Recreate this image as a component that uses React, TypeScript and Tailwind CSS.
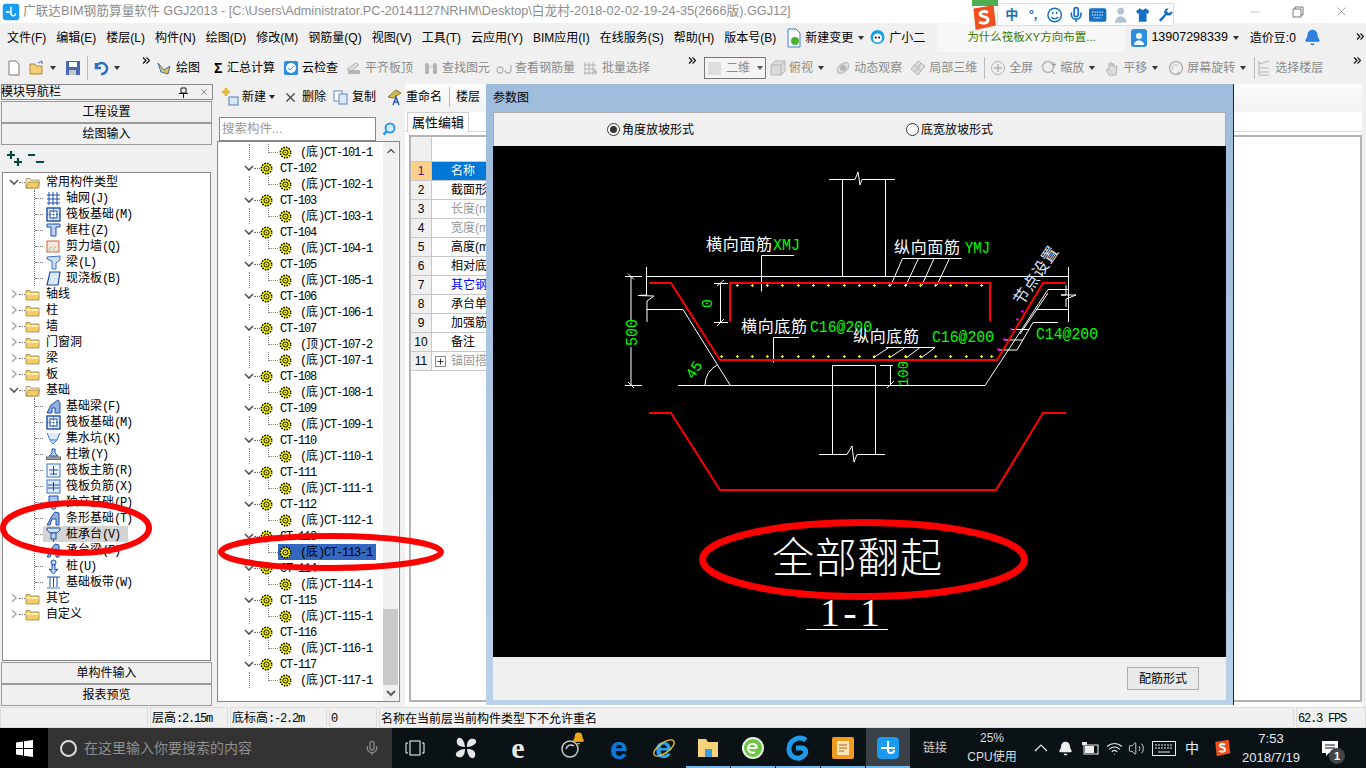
import { ChevronUp, Mic, Wifi, Volume2, Bell, X, Minus, Plus } from 'lucide-react';
import type { ReactNode } from 'react';

const Sim = ({ text, className = '' }: { text: string; className?: string }) => {
  const runs = text.match(/[\x00-\x7f]+|[^\x00-\x7f]+/g) || [];
  return (
    <span className={`whitespace-nowrap ${className}`}>
      {runs.map((r, i) =>
        r.charCodeAt(0) < 128 ? (
          <span key={i} className="font-['Liberation_Mono',monospace] tracking-[-1.2px] text-[12px]">{r}</span>
        ) : (
          <span key={i} className="font-['Noto_Sans_CJK_SC',sans-serif] text-[12px] leading-none">{r}</span>
        )
      )}
    </span>
  );
};

const Chev = ({ open }: { open: boolean }) => (
  <svg width="10" height="10" viewBox="0 0 10 10" className="shrink-0">
    {open ? (
      <polyline points="1,3 5,7 9,3" fill="none" stroke="#555" strokeWidth="1.6" />
    ) : (
      <polyline points="3,1 7,5 3,9" fill="none" stroke="#b0b0b0" strokeWidth="1.6" />
    )}
  </svg>
);

const Folder = ({ open }: { open: boolean }) => (
  <svg width="15" height="13" viewBox="0 0 15 13" className="shrink-0">
    <path d="M1 2.5h4l1 1.5h8v8H1z" fill={open ? '#fff3cf' : '#f6cd62'} stroke="#9a8350" strokeWidth="0.8" />
    {open ? (
      <path d="M1 12l2.5-6h11l-2.5 6z" fill="#f6cd62" stroke="#9a8350" strokeWidth="0.8" />
    ) : (
      <rect x="1.5" y="5" width="12" height="2" fill="#fff0b8" />
    )}
  </svg>
);

const Gear = () => (
  <svg width="13" height="13" viewBox="0 0 13 13" className="shrink-0">
    <circle cx="6.5" cy="6.5" r="5.2" fill="#ffff00" stroke="#000" strokeWidth="1.6" strokeDasharray="1.6 1.1" />
    <circle cx="6.5" cy="6.5" r="2.6" fill="#ffff00" stroke="#000" strokeWidth="1" />
    <rect x="5.7" y="5.7" width="1.6" height="1.6" fill="#555" />
  </svg>
);

const kinds: Record<string, ReactNode> = {
  grid: <path d="M3 1v13M7 1v13M11 1v13M1 4h13M1 8h13M1 12h13" stroke="#1d4fa8" fill="none" />,
  raft: <><rect x="1" y="1" width="13" height="13" fill="#dfeaf8" stroke="#1d4fa8" strokeWidth="1.4" /><rect x="4" y="4" width="7" height="7" fill="#fff" stroke="#1d4fa8" /><path d="M7.5 1v13M1 7.5h13" stroke="#1d4fa8" strokeDasharray="1.5 1.5" /></>,
  col: <><path d="M1 1h13v3H10v9H5V4H1z" fill="#bcd4f4" stroke="#1d4fa8" /></>,
  wall: <><rect x="1" y="2" width="12" height="11" fill="#f0e6da" stroke="#c8693a" /><path d="M3 11l2-3 3 3 2-4" stroke="#999" strokeDasharray="1 1" fill="none" /></>,
  beam: <><path d="M1 2l13-1v4l-4 3v6H6V6L1 4z" fill="#cfe0f6" stroke="#3b74c4" /></>,
  slab: <path d="M4 1h10l-2 13H1z" fill="#dbe9fb" stroke="#1d4fa8" strokeWidth="1.2" />,
  fbeam: <><path d="M1 14l4-8 7-5 2 3v10H9V9H6v5z" fill="#8fb0dc" stroke="#1d4fa8" /></>,
  pit: <><path d="M1 2l3 7h7l3-7M4 9l3 4 4-4" fill="#dbe9fb" stroke="#3b74c4" /></>,
  pier: <><path d="M6 2h3v4l3 3H3l3-3z" fill="#bcd4f4" stroke="#1d4fa8" /><rect x="0.5" y="10" width="14" height="2.5" fill="#aaa" stroke="#666" /></>,
  main: <><rect x="1" y="1" width="13" height="13" fill="#eef4fc" stroke="#3b74c4" /><path d="M7.5 3v9M3 7h9M4 11h7" stroke="#1d4fa8" fill="none" /></>,
  neg: <><rect x="1" y="1" width="13" height="13" fill="#dfeaf8" stroke="#3b74c4" /><path d="M7.5 3v9M2 6h11M2 9h11" stroke="#1d4fa8" fill="none" /></>,
  iso: <><path d="M3 1h9v7l-3 6H6L3 8z" fill="#a9c4ea" stroke="#1d4fa8" /></>,
  strip: <><path d="M1 14l5-9 3-4 4 1v12h-3V8H6l-2 6z" fill="#8fb0dc" stroke="#1d4fa8" /></>,
  cap: <><path d="M1 1h13v2l-3 3H4L1 3z" fill="#cfe0f6" stroke="#1d4fa8" /><rect x="5" y="6" width="5" height="6" fill="#bcd4f4" stroke="#1d4fa8" /><path d="M7.5 12v3" stroke="#1d4fa8" /></>,
  pile: <><circle cx="7.5" cy="3.5" r="2.5" fill="#bcd4f4" stroke="#1d4fa8" /><path d="M6 6h3v5l3-1-4.5 5L3 10l3 1z" fill="#bcd4f4" stroke="#1d4fa8" /></>,
  band: <><path d="M1 2h13M1 13h13M4 2v11M11 2v11M7.5 2v11" stroke="#1d4fa8" fill="none" /><rect x="1" y="12" width="13" height="2" fill="#9dbce6" /></>,
};

const Comp = ({ kind }: { kind: string }) => (
  <svg width="15" height="15" viewBox="0 0 15 15" className="shrink-0">{kinds[kind]}</svg>
);

const LeftChild = ({ label, kind, selected }: { label: string; kind: string; selected?: boolean }) => (
  <div className="flex h-4 items-center">
    <div className="w-[8px] border-t border-dotted border-[#777]" />
    <div className={`flex h-4 items-center pl-[3px] pr-[8px] ${selected ? 'bg-[#d4d4d4]' : ''}`}>
      <Comp kind={kind} />
      <Sim text={label} className="ml-[5px]" />
    </div>
  </div>
);

const LeftGroup = ({ label, open, items }: { label: string; open?: boolean; items?: [string, string][] }) => (
  <div>
    <div className="flex h-4 items-center pl-[6px]">
      <Chev open={!!open} />
      <div className="w-[6px] border-t border-dotted border-[#777]" />
      <Folder open={!!open} />
      <Sim text={label} className="ml-[6px]" />
    </div>
    {items && (
      <div className="ml-[31px] border-l border-dotted border-[#777]">
        {items.map(([l, k]) => (
          <LeftChild key={l} label={l} kind={k} selected={l === '桩承台(V)'} />
        ))}
      </div>
    )}
  </div>
);

const ctTree: [string, string[]][] = [
  ['', ['(底)CT-101-1']],
  ...Array.from({ length: 16 }, (_, i): [string, string[]] => {
    const n = 102 + i;
    return [`CT-${n}`, n === 107 ? ['(顶)CT-107-2', '(底)CT-107-1'] : [`(底)CT-${n}-1`]];
  }),
];

const TreeRows = () => (
  <div className="flex-1 overflow-hidden pt-[2px]">
    {ctTree.map(([head, kids]) => (
      <div key={head}>
        {head && (
          <div className="flex h-4 items-center pl-[26px]">
            <Chev open />
            <div className="w-[6px] border-t border-dotted border-[#777]" />
            <Gear />
            <Sim text={head} className="ml-[7px]" />
          </div>
        )}
        {kids.map((k) => (
          <div key={k} className="flex h-4 items-center">
            <div className="w-[31px]" />
            <div className="h-4 w-[19px] border-l border-dotted border-[#777]" />
            <div className="h-[9px] w-[10px] self-start border-b border-l border-dotted border-[#777]" />
            <div className={`flex h-4 w-[98px] items-center pl-[1px] ${k === '(底)CT-113-1' ? 'bg-[#3268c0]' : ''}`}>
              <Gear />
              <Sim text={k} className="ml-[8px]" />
            </div>
          </div>
        ))}
      </div>
    ))}
  </div>
);

const PanelBtn = ({ label }: { label: string }) => (
  <div className="mx-[1px] flex h-[22px] items-center justify-center border border-[#9a9a9a] bg-[#f0f0f0] text-[12px] text-black">{label}</div>
);

const tool = (d: ReactNode, w = 16) => (
  <svg width={w} height="16" viewBox="0 0 16 16" className="shrink-0">{d}</svg>
);

const Caret = () => <span className="mx-[5px] inline-block h-0 w-0 border-x-[3px] border-t-[4px] border-x-transparent border-t-[#333]" />;

const More = ({ className }: { className: string }) => (
  <svg width="8" height="7" viewBox="0 0 8 7" className={`shrink-0 self-start mt-[5px] ${className}`}>
    <path d="M1 0.5l3 3-3 3M4.5 0.5l3 3-3 3" fill="none" stroke="#111" strokeWidth="1.2" />
  </svg>
);

const menus = ['文件(F)', '编辑(E)', '楼层(L)', '构件(N)', '绘图(D)', '修改(M)', '钢筋量(Q)', '视图(V)', '工具(T)', '云应用(Y)', 'BIM应用(I)', '在线服务(S)', '帮助(H)', '版本号(B)'];

const gray = 'text-[#8b8b8b]';
const S1 = '#b4b4b4';
const S2 = '#dcdcdc';
const grayIcons: Record<string, ReactNode> = {
  align: tool(<><path d="M1 9l9-6 3 2-8 6z" fill={S2} stroke={S1} /><rect x="2" y="10" width="12" height="4" fill={S1} /></>),
  find: tool(<><rect x="2" y="3" width="4" height="11" rx="1.5" fill={S1} /><rect x="10" y="3" width="4" height="11" rx="1.5" fill={S1} /><rect x="6" y="5" width="4" height="3" fill={S2} /></>),
  view: tool(<path d="M1 10a3 3 0 1 0 6 0a3 3 0 1 0-6 0M9 10a3 3 0 1 0 6 0V5" fill="none" stroke={S1} strokeWidth="1.3" />),
  batch: tool(<><path d="M2 2v13M6 2v13M10 2v13M1 5h12M1 9h12M1 13h12" stroke={S1} fill="none" /><path d="M10 9l5 3-2 1 1 2-2-1z" fill={S1} /></>),
  top: tool(<><path d="M1 5l4-4h10v10l-4 4H1z" fill={S2} stroke={S1} /><path d="M1 5h10v10M11 5l4-4" fill="none" stroke={S1} /></>),
  orbit: tool(<><ellipse cx="8" cy="8" rx="7" ry="4" transform="rotate(-40 8 8)" fill={S2} stroke={S1} /><circle cx="8" cy="8" r="3" fill={S1} /></>),
  local: tool(<><path d="M8 1l7 5-7 9-7-6z" fill={S2} stroke={S1} /><path d="M4 5l7 6M11 3l-6 9" stroke={S1} /></>),
  full: tool(<><circle cx="8" cy="8" r="6.5" fill="#eee" stroke={S1} /><path d="M8 4v8M4 8h8" stroke="#999" /></>),
  zoom: tool(<><circle cx="7" cy="7" r="5.5" fill="#eee" stroke={S1} strokeWidth="1.5" /><path d="M11 11l3 3M13 2v5M11 4.5h4" stroke="#999" /></>),
  pan: tool(<path d="M5 15c-2-3-3-5-2-6l2 1V3l2 3V2l2 4V3l2 4 2-1-1 9z" fill={S2} stroke={S1} />),
  rotate: tool(<><circle cx="8" cy="8" r="6.5" fill="none" stroke={S1} strokeWidth="1.5" /><path d="M5 10a3 3 0 0 1 5-4" fill="none" stroke={S1} /><path d="M11 14h-3l3-3z" fill={S1} /></>),
  floor: tool(<path d="M3 4l10-3M3 8h10M3 12h10M3 15h10M3 1v14" stroke={S1} fill="none" />),
};

const Tb = ({ icon, label, cls = '', muted }: { icon: ReactNode; label: string; cls?: string; muted?: boolean }) => (
  <div className={`flex shrink-0 items-center gap-[3px] ${cls}`}>
    {icon}
    <span className={`whitespace-nowrap ${muted ? gray : 'text-black'}`}>{label}</span>
  </div>
);

const props: [string, string, string][] = [
  ['1', '名称', 'sel'],
  ['2', '截面形状', ''],
  ['3', '长度(mm)', 'gray'],
  ['4', '宽度(mm)', 'gray'],
  ['5', '高度(mm)', ''],
  ['6', '相对底标高(m)', ''],
  ['7', '其它钢筋', 'blue'],
  ['8', '承台单边加强筋', ''],
  ['9', '加强筋起步(mm)', ''],
  ['10', '备注', ''],
  ['11', '锚固搭接', 'plus'],
];

const topDots = [412, 457, 502, 547, 595, 640, 685, 733, 778, 823, 869, 917, 962, 1007, 1052, 1099, 1145];
const botDots = [365, ...topDots, 1175];
const pinks = [[1195, 538], [1213, 508], [1234, 478], [1252, 448], [1267, 424]];

const Cad = () => {
  const W = '#ffffff';
  const G = '#00ff00';
  const cjk = "'Noto Sans CJK SC', sans-serif";
  const mono = "'Liberation Mono', monospace";
  return (
    <svg viewBox="493 146 733 511" className="h-[511px] w-[733px] bg-black">
      <g fill="none" stroke={W} strokeWidth="1">
        <path d="M829 179.5H855L858 172L860 185L862 179.5H895M842.5 179.5V276.5M885.5 179.5V276.5" />
        <path d="M646.5 276.5H1068.5M646.5 267V295L638 295.5L654 296L647 301V322M646.5 309.5H683L730 385" />
        <path d="M678 385.5H985L1048 289.5H1068M1068.5 267V322M1036 309.5H1068.5M1066 285V295L1061 295L1076 295L1066 299V307" />
        <path d="M625 276.5H642M631 276.5V320M631 347V385M625 385.5H642M628 273.5L634 279.5M628 382L634 388" />
        <path d="M714 283.5H728M720.5 283.5V322.5M714 322.5H728M717 286L724 280M717 326L724 319" />
        <path d="M832.5 385.5V365.5H875.5V454M832.5 385.5V454.5M819 454.5H847L852 446L854 462L857 454.5H885" />
        <path d="M880 365.5H893M890.5 365.5V385M887 388L894 381" />
        <path d="M705 385A24 24 0 0 1 717 365" />
        <path d="M761.5 291.5V255.5H794M902.5 258.5H961.5M902.5 258.5L891 285M918.5 258.5L906 285M934 258.5L922 285M949.5 258.5L937 285" />
        <path d="M773.5 362.5V337.5H799M886 347.5H935M889 347.5L873 358M905 347.5L889 358M920 347.5L906 358M935 347.5L921 358" />
        <path d="M1058 322.5H1033L1017 350M1012 329.5H1029M1005 340H1023M999 350H1017M1048 293L1020 334" />
      </g>
      <g fill="none" stroke="#ff0000" strokeWidth="2">
        <path d="M649 283H671L720 360H997L1043 283H1066" />
        <path d="M730 321.5V283H990V321.5" />
        <path d="M649 413H671L720 490H996L1043 413H1066" />
      </g>
      {topDots.map((x) => (
        <path key={x} d={`M${x / 3 + 598.5} 285.5h3M${x / 3 + 600} 284v3`} stroke="#ffff00" />
      ))}
      {botDots.map((x, i) => (
        <path key={i} d={`M${x / 3 + 598.5} 356.5h3M${x / 3 + 600} 355v3`} stroke="#ffff00" />
      ))}
      {pinks.map(([x, y]) => (
        <path key={x} d={`M${x / 3 + 598.5} ${y / 3 + 170}h3M${x / 3 + 600} ${y / 3 + 168.5}v3`} stroke="#ff00ff" />
      ))}
      <text x="706" y="250" fill={W} fontFamily={cjk} fontSize="16" textLength="66">横向面筋</text>
      <text x="773" y="250" fill={G} fontFamily={mono} fontSize="16" textLength="27" lengthAdjust="spacingAndGlyphs">XMJ</text>
      <text x="894" y="253" fill={W} fontFamily={cjk} fontSize="16" textLength="66">纵向面筋</text>
      <text x="965" y="253" fill={G} fontFamily={mono} fontSize="16" textLength="25" lengthAdjust="spacingAndGlyphs">YMJ</text>
      <text x="741" y="332" fill={W} fontFamily={cjk} fontSize="16" textLength="66">横向底筋</text>
      <text x="810" y="332" fill={G} fontFamily={mono} fontSize="16" textLength="62" lengthAdjust="spacingAndGlyphs">C16@200</text>
      <text x="853" y="342" fill={W} fontFamily={cjk} fontSize="16" textLength="66">纵向底筋</text>
      <text x="932" y="342" fill={G} fontFamily={mono} fontSize="16" textLength="62" lengthAdjust="spacingAndGlyphs">C16@200</text>
      <text x="1036" y="339" fill={G} fontFamily={mono} fontSize="16" textLength="62" lengthAdjust="spacingAndGlyphs">C14@200</text>
      <text transform="translate(637 346) rotate(-90)" fill={G} fontFamily={mono} fontSize="17" textLength="27" lengthAdjust="spacingAndGlyphs">500</text>
      <text transform="translate(712 308) rotate(-90)" fill={G} fontFamily={mono} fontSize="15">0</text>
      <text transform="translate(693 380) rotate(-57)" fill={G} fontFamily={mono} fontSize="15" textLength="18" lengthAdjust="spacingAndGlyphs">45</text>
      <text transform="translate(908 386) rotate(-90)" fill={G} fontFamily={mono} fontSize="15" textLength="25" lengthAdjust="spacingAndGlyphs">100</text>
      <text transform="translate(1022 306) rotate(-56)" fill="#dfe6ff" fontFamily={cjk} fontSize="16" textLength="66">节点设置</text>
      <text x="772" y="573" fill={W} fontFamily={`'Liberation Serif', ${cjk}`} fontSize="42" textLength="170" fontWeight="300">全部翻起</text>
      <text x="820" y="626" fill={W} fontFamily="'Liberation Serif', serif" fontSize="40" textLength="60">1-1</text>
      <path d="M806 629.5H888" stroke={W} />
    </svg>
  );
};

const Radio = ({ on, label, cls }: { on?: boolean; label: string; cls: string }) => (
  <div className={`flex items-center gap-[2px] ${cls}`}>
    <span className="flex h-[13px] w-[13px] items-center justify-center rounded-full border border-[#333] bg-white">
      {on && <span className="h-[7px] w-[7px] rounded-full bg-[#333]" />}
    </span>
    <span className="text-[12px] text-black">{label}</span>
  </div>
);

const Ellipse = ({ cls, rx, ry, sw }: { cls: string; rx: number; ry: number; sw: number }) => (
  <svg width={rx * 2 + sw} height={ry * 2 + sw} className={`pointer-events-none absolute ${cls}`}>
    <ellipse cx={rx + sw / 2} cy={ry + sw / 2} rx={rx} ry={ry} fill="none" stroke="#ff0000" strokeWidth={sw} />
  </svg>
);

const Tray = ({ children, cls }: { children: ReactNode; cls: string }) => (
  <div className={`relative flex h-10 shrink-0 items-center justify-center ${cls}`}>{children}</div>
);

const Underlined = ({ children, active }: { children: ReactNode; active?: boolean }) => (
  <div className={`relative flex h-10 w-[44px] shrink-0 items-center justify-center ${active ? 'bg-[#3a4248]' : ''}`}>
    {children}
    <div className="absolute bottom-0 left-0 right-0 h-[2px] bg-[#76b9ed]" />
  </div>
);

const LogoS = ({ s = 24 }: { s?: number }) => (
  <svg width={s} height={s} viewBox="0 0 24 24">
    <path d="M3 4L21 1l2 18-18 4z" fill="#f0501e" />
    <path d="M16 7.5c-3-1.5-7-1-7 1.5s7 1.5 7 5-5 3.5-8 2" fill="none" stroke="#fff" strokeWidth="2.6" />
  </svg>
);

const BlueApp = () => (
  <svg width="24" height="24" viewBox="0 0 24 24">
    <rect x="1" y="1" width="22" height="22" rx="4" fill="#1a9bf0" />
    <path d="M12 5v9a3 3 0 0 0 6 0M12 12H5M12 12h7" fill="none" stroke="#fff" strokeWidth="2" />
  </svg>
);

export default function App() {
  return (
    <div className="relative h-[768px] w-[1366px] overflow-hidden bg-[#f0f0f0] font-['Liberation_Sans','Noto_Sans_CJK_SC',sans-serif] text-[12px] text-black">
      {/* title bar */}
      <div className="flex h-[23px] items-center bg-white pl-[2px]">
        <svg width="18" height="18" viewBox="0 0 24 24" className="shrink-0"><rect x="1" y="1" width="22" height="22" rx="4" fill="#1a9bf0" /><path d="M12 5v9a3 3 0 0 0 6 0M12 12H5" fill="none" stroke="#fff" strokeWidth="2" /></svg>
        <span className="ml-[3px] whitespace-nowrap text-[12.7px] text-[#8d8d8d]">广联达BIM钢筋算量软件 GGJ2013 - [C:\Users\Administrator.PC-20141127NRHM\Desktop\白龙村-2018-02-02-19-24-35(2666版).GGJ12]</span>
        <div className="ml-auto mr-[17px] flex items-center gap-[30px] text-[#777]">
          <Minus size={14} className="text-[#ccc]" />
          <svg width="12" height="12" viewBox="0 0 12 12"><path d="M3 3V1h8v8H9M1 3h8v8H1z" fill="none" stroke="#777" /></svg>
          <X size={15} strokeWidth={1} />
        </div>
      </div>
      {/* menu */}
      <div className="flex h-[29px] items-center pl-[7px]">
        {menus.map((m) => (
          <span key={m} className="mr-[10px] whitespace-nowrap text-[12px]">{m}</span>
        ))}
        <div className="flex items-center">
          <svg width="16" height="20" viewBox="0 0 16 20" className="shrink-0"><path d="M2 1h8l4 4v14H2z" fill="#fff" stroke="#3d7ec9" /><circle cx="9" cy="13" r="4" fill="#4caf34" /></svg>
          <span className="ml-[3px] whitespace-nowrap">新建变更</span><Caret />
          <svg width="17" height="18" viewBox="0 0 17 18" className="shrink-0"><circle cx="8.5" cy="8" r="7" fill="#18a0e8" /><circle cx="8.5" cy="9" r="4.5" fill="#fff" /><circle cx="6.8" cy="8.5" r="1" /><circle cx="10.2" cy="8.5" r="1" /></svg>
          <span className="ml-[3px] whitespace-nowrap">广小二</span>
        </div>
        <div className="ml-[12px] flex h-[29px] w-[188px] shrink-0 items-center rounded-t-[4px] bg-[#f7f7f7] pl-[30px] text-[11.5px] text-[#3b7a00]">为什么筏板XY方向布置...</div>
        <div className="flex flex-1 items-center pl-[6px] pr-[2px]">
          <svg width="16" height="18" viewBox="0 0 16 18" className="shrink-0"><rect width="16" height="18" rx="3" fill="#2d8fe0" /><circle cx="8" cy="7" r="3" fill="#fff" /><path d="M3 16c0-6 10-6 10 0z" fill="#fff" /></svg>
          <span className="ml-[4px] whitespace-nowrap text-[12.5px]">13907298339</span><Caret />
          <span className="ml-[6px] whitespace-nowrap">造价豆:0</span>
          <Bell size={17} fill="#2d7fe0" stroke="#2d7fe0" className="ml-[8px]" />
          <More className="ml-auto" />
        </div>
      </div>
      {/* toolbar */}
      <div className="flex h-[32px] items-center overflow-hidden pl-[6px] text-[12px]">
        {tool(<path d="M3 1h7l3 3v11H3z" fill="#fff" stroke="#777" />)}
        <div className="ml-[7px]">{tool(<><path d="M1 4h5l1 2h6v8H1z" fill="#f4cf74" stroke="#a98a3e" /><path d="M9 3l4-2v3" stroke="#2d6fc0" fill="none" /></>)}</div>
        <Caret />
        <div className="ml-[4px]">{tool(<><rect x="1" y="1" width="14" height="14" fill="#4967b5" /><rect x="4" y="2" width="8" height="5" fill="#fff" /><rect x="4" y="10" width="7" height="5" fill="#c8c8c8" /></>)}</div>
        <div className="ml-[6px] h-[24px] border-l border-[#bbb]" />
        <div className="ml-[5px]">{tool(<path d="M3 3v5h5M3 8a5.5 5.5 0 1 1 5 6" fill="none" stroke="#2d6fc0" strokeWidth="2.5" />)}</div>
        <Caret />
        <More className="ml-[17px] mr-[5px]" />
        <Tb icon={tool(<><path d="M2 3l6 7 6-4-2 8-7-2z" fill="#e8c24a" stroke="#3d6fb5" /></>, 18)} label="绘图" />
        <Tb cls="ml-[14px]" icon={<span className="w-[10px] text-[14px] font-bold leading-none">Σ</span>} label="汇总计算" />
        <Tb cls="ml-[8px]" icon={tool(<><rect x="1" y="1" width="15" height="15" rx="2" fill="#2d8fe0" transform="scale(.94)" /><circle cx="8" cy="8" r="5" fill="#fff" /><path d="M5 8l2 2 4-4" stroke="#2d8fe0" fill="none" /></>)} label="云检查" />
        <Tb cls="ml-[8px]" muted icon={grayIcons.align} label="平齐板顶" />
        <Tb cls="ml-[10px]" muted icon={grayIcons.find} label="查找图元" />
        <Tb cls="ml-[6px]" muted icon={grayIcons.view} label="查看钢筋量" />
        <Tb cls="ml-[8px]" muted icon={grayIcons.batch} label="批量选择" />
        <More className="ml-[38px] mr-[2px]" />
        <div className="ml-[6px] flex h-[22px] w-[62px] shrink-0 items-center border border-[#777] bg-[#f4f4f4] pl-[3px]">
          <span className="h-[13px] w-[13px] bg-[#dedede]" />
          <span className={`ml-[5px] ${gray}`}>二维</span>
          <span className="ml-[7px] h-0 w-0 border-x-[3px] border-t-[4px] border-x-transparent border-t-[#555]" />
        </div>
        <Tb cls="ml-[4px]" muted icon={grayIcons.top} label="俯视" />
        <Caret />
        <Tb cls="ml-[6px]" muted icon={grayIcons.orbit} label="动态观察" />
        <Tb cls="ml-[8px]" muted icon={grayIcons.local} label="局部三维" />
        <div className="ml-[7px] h-[22px] border-l border-[#bbb]" />
        <Tb cls="ml-[5px]" muted icon={grayIcons.full} label="全屏" />
        <Tb cls="ml-[8px]" muted icon={grayIcons.zoom} label="缩放" />
        <Caret />
        <Tb cls="ml-[4px]" muted icon={grayIcons.pan} label="平移" />
        <Caret />
        <Tb cls="ml-[5px]" muted icon={grayIcons.rotate} label="屏幕旋转" />
        <Caret />
        <div className="ml-[3px] h-[22px] border-l border-[#bbb]" />
        <Tb cls="ml-[1px]" muted icon={grayIcons.floor} label="选择楼层" />
        <More className="ml-auto mr-[5px]" />
      </div>

      {/* main */}
      <div className="relative isolate flex h-[623px]">
        <div className="flex w-[213px] shrink-0 flex-col">
          <div className="mb-[1px] ml-[1px] flex h-[16px] items-center border border-[#888] bg-[#f0f0f0] pr-[3px] text-[12px] leading-none">
            <span className="-ml-[1px]">模块导航栏</span>
            <svg width="9" height="11" viewBox="0 0 9 11" className="ml-auto mr-[11px]"><path d="M2 1h5v5H2zM0 6.5h9M4.5 7v4" fill="none" stroke="#111" /></svg>
            <X size={10} strokeWidth={1} />
          </div>
          <PanelBtn label="工程设置" />
          <PanelBtn label="绘图输入" />
          <div className="flex h-[27px] items-center gap-[5px] pl-[7px]">
            <svg width="16" height="16" viewBox="0 0 16 16"><path d="M4 0v8M0 4h8M11 7v8M7 11h8" stroke="#004a4a" strokeWidth="2.2" /></svg>
            <svg width="16" height="16" viewBox="0 0 16 16"><path d="M0 4h7M8 11h8" stroke="#004a4a" strokeWidth="2.2" /></svg>
          </div>
          <div className="mx-[2px] flex-1 overflow-hidden border border-[#888] bg-white pt-[1px]">
            <LeftGroup label="常用构件类型" open items={[['轴网(J)', 'grid'], ['筏板基础(M)', 'raft'], ['框柱(Z)', 'col'], ['剪力墙(Q)', 'wall'], ['梁(L)', 'beam'], ['现浇板(B)', 'slab']]} />
            {['轴线', '柱', '墙', '门窗洞', '梁', '板'].map((l, i) => <LeftGroup key={i} label={l} />)}
            <LeftGroup label="基础" open items={[['基础梁(F)', 'fbeam'], ['筏板基础(M)', 'raft'], ['集水坑(K)', 'pit'], ['柱墩(Y)', 'pier'], ['筏板主筋(R)', 'main'], ['筏板负筋(X)', 'neg'], ['独立基础(P)', 'iso'], ['条形基础(T)', 'strip'], ['桩承台(V)', 'cap'], ['承台梁(F)', 'strip'], ['桩(U)', 'pile'], ['基础板带(W)', 'band']]} />
            <LeftGroup label="其它" />
            <LeftGroup label="自定义" />
          </div>
          <div className="mt-[1px]"><PanelBtn label="单构件输入" /></div>
          <div className="mb-[1px]"><PanelBtn label="报表预览" /></div>
        </div>

        <div className="relative z-10 ml-[4px] flex w-[188px] shrink-0 flex-col">
          <div className="mb-[7px] flex h-[26px] items-center gap-[3px] whitespace-nowrap pl-[4px]">
            <svg width="18" height="18" viewBox="0 0 18 18" className="shrink-0"><path d="M5 0v8M1 4h8" stroke="#e2b93b" strokeWidth="3" /><rect x="8" y="9" width="9" height="8" fill="#dce8f8" stroke="#4a7cc0" /></svg>
            <span className="shrink-0">新建</span><span className="h-0 w-0 shrink-0 border-x-[3px] border-t-[4px] border-x-transparent border-t-[#222]" />
            <X size={15} strokeWidth={2} className="ml-[5px] shrink-0 text-[#444]" />
            <span className="ml-[1px] shrink-0">删除</span>
            <svg width="15" height="15" viewBox="0 0 15 15" className="ml-[4px] shrink-0"><rect x="1" y="1" width="8" height="10" fill="#fff" stroke="#5a8ac8" /><rect x="6" y="4" width="8" height="10" fill="#dce8f8" stroke="#5a8ac8" /></svg>
            <span className="ml-[1px] shrink-0">复制</span>
            <svg width="17" height="17" viewBox="0 0 17 17" className="ml-[6px] shrink-0"><path d="M3 8l8-7 5 3-8 5z" fill="#d8b84a" stroke="#8c7a30" /><path d="M8 16l3-8 3 8M9 13h4" stroke="#2d5fb0" strokeWidth="1.5" fill="none" /></svg>
            <span className="ml-[1px] shrink-0">重命名</span>
            <div className="ml-[4px] h-[20px] shrink-0 border-l border-[#bbb]" />
            <span className="ml-[3px] shrink-0">楼层</span>
            <span className="ml-[3px] shrink-0">基础</span>
          </div>
          <div className="flex h-[24px] w-[183px] items-center">
            <div className="ml-[2px] flex h-[24px] w-[157px] items-center border border-[#888] bg-white pl-[2px] text-[12.5px] text-[#999]">搜索构件...</div>
            <svg width="14" height="14" viewBox="0 0 14 14" className="ml-[6px]"><circle cx="8" cy="6" r="4.5" fill="#d6ecfb" stroke="#2d9be8" strokeWidth="2" /><path d="M4.5 9.5L1.5 12.5" stroke="#2d9be8" strokeWidth="2.5" /></svg>
          </div>
          <div className="flex h-[561px] w-[183px] border border-[#888] bg-white">
            <TreeRows />
            <div className="mr-[1px] flex w-[15px] shrink-0 flex-col items-center justify-between bg-[#f0f0f0]">
              <ChevronUp size={12} strokeWidth={3} className="mt-[3px] text-[#606060]" />
              <div className="flex w-[15px] flex-col items-center">
                <div className="h-[76px] w-[15px] bg-[#c9c9c9]" />
                <svg width="10" height="16" viewBox="0 0 10 16"><polyline points="1,6 5,10 9,6" fill="none" stroke="#606060" strokeWidth="2" /></svg>
              </div>
            </div>
          </div>
        </div>

        <div className="flex flex-1 flex-col bg-[#f0f0f0] pr-[4px]">
          <div className="h-[28px] bg-gradient-to-b from-[#fcfcfc] to-[#f2f2f2]" />
          <div className="flex h-[20px] border-b border-[#dcdcdc] bg-white pl-[2px]">
            <div className="flex h-[20px] w-[62px] items-center justify-center border border-b-0 border-[#cfcfcf] bg-white text-[13px]">属性编辑</div>
          </div>
          <div className="flex-1 bg-white pb-[5px] pl-[4px] pt-[3px]">
            <div className="h-full border-2 border-[#b4b4b4]">
              <div className="w-[110px]">
                <div className="flex h-[25px] border-b border-[#c8c8c8]">
                  <div className="w-[21px] border-r border-[#c8c8c8] bg-[#f0f0f0]" />
                </div>
                {props.map(([n, l, k]) => (
                  <div key={n} className="flex h-[19px] border-b border-[#c8c8c8]">
                    <div className={`flex w-[21px] shrink-0 items-center justify-center border-r border-[#c8c8c8] ${k === 'sel' ? 'bg-[#ffd08a] text-[#5a1070]' : 'bg-[#f0f0f0]'}`}>{n}</div>
                    <div className={`relative flex flex-1 items-center whitespace-nowrap pl-[19px] ${k === 'sel' ? 'bg-[#0078d7] text-white' : ''} ${k === 'gray' || k === 'plus' ? 'text-[#999]' : ''} ${k === 'blue' ? 'text-[#0000ff]' : ''}`}>
                      {k === 'plus' && (
                        <span className="absolute left-[3px] flex h-[11px] w-[11px] items-center justify-center border border-[#888] text-black"><Plus size={9} /></span>
                      )}
                      {l}
                    </div>
                  </div>
                ))}
              </div>
            </div>
          </div>
        </div>

        {/* dialog */}
        <div className="absolute left-[486px] top-0 z-20 flex h-[621px] w-[748px] flex-col border-r border-[#222] bg-gradient-to-b from-[#9fbcdc] to-[#b9d1e9] px-[7px]">
          <div className="flex h-[28px] shrink-0 items-center text-[12px] text-black">参数图</div>
          <div className="flex h-[34px] shrink-0 items-center border border-b-0 border-[#aaa] bg-[#f0f0f0]">
            <Radio on label="角度放坡形式" cls="ml-[113px]" />
            <Radio label="底宽放坡形式" cls="ml-[212px]" />
          </div>
          <Cad />
          <div className="flex h-[43px] shrink-0 items-center justify-end bg-[#f0f0f0] pr-[27px]">
            <div className="flex h-[23px] w-[72px] items-center justify-center border border-[#adadad] bg-[#e9e9e9]">配筋形式</div>
          </div>
        </div>
      </div>

      {/* status bar */}
      <div className="flex h-[21px] gap-[2px] bg-[#f0f0f0]">
        {[['w-[148px]', ''], ['w-[78px]', '层高:2.15m'], ['w-[97px]', '底标高:-2.2m'], ['w-[48px]', '0'], ['w-[915px]', '名称在当前层当前构件类型下不允许重名'], ['flex-1', '62.3 FPS']].map(([w, t], i) => (
          <div key={i} className={`flex items-center overflow-hidden border border-[#dcdcdc] pl-[1px] pt-[2px] ${w}`}>
            <Sim text={t} />
          </div>
        ))}
      </div>

      {/* taskbar */}
      <div className="flex h-[40px] items-center bg-[#0a1216] text-white">
        <Tray cls="w-[48px] bg-black">
          <svg width="17" height="17" viewBox="0 0 17 17"><path d="M0 2.5l7-1v6.5H0zM8 1.3L17 0v8H8zM0 9h7v6.5l-7-1zM8 9h9v8l-9-1.3z" fill="#fff" /></svg>
        </Tray>
        <div className="flex h-10 w-[344px] items-center bg-[#333333] pl-[12px]">
          <span className="h-[17px] w-[17px] rounded-full border-2 border-[#ddd]" />
          <span className="ml-[7px] text-[14px] text-[#8f8f8f]">在这里输入你要搜索的内容</span>
          <Mic size={16} className="ml-[112px] text-[#888]" />
        </div>
        <Tray cls="ml-[1px] w-[44px]">
          <svg width="20" height="16" viewBox="0 0 20 16" fill="none" stroke="#fff"><rect x="5" y="1" width="10" height="14" /><path d="M3 3H1v10h2M17 3h2v10h-2" /></svg>
        </Tray>
        <Tray cls="ml-[7px] w-[44px]">
          <svg width="22" height="22" viewBox="0 0 22 22" fill="#e8e8e8"><path d="M10 10C3 10 1 7 2 3s7-3 8 7zM12 10c0-7 3-9 7-8s3 7-7 8zM12 12c7 0 9 3 8 7s-7 3-8-7zM10 12c0 7-3 9-7 8s-3-7 7-8z" /></svg>
        </Tray>
        <Tray cls="ml-[8px] w-[44px]">
          <span className="font-['Liberation_Serif',serif] text-[30px] font-bold leading-none text-[#e8e8e8]">e</span>
        </Tray>
        <Tray cls="ml-[10px] w-[44px]">
          <svg width="24" height="24" viewBox="0 0 24 24" fill="none" stroke="#ccc" strokeWidth="1.5"><circle cx="10" cy="13" r="8" /><path d="M6 13a5 5 0 0 1 8-3" /></svg>
          <Bell size={13} fill="#f0a818" stroke="#f0a818" className="absolute right-[9px] top-[4px]" />
        </Tray>
        <Tray cls="ml-[3px] w-[44px]">
          <span className="font-['Liberation_Sans',sans-serif] text-[32px] font-bold leading-none text-[#0a78d8]">e</span>
        </Tray>
        <Tray cls="w-[45px]">
          <span className="font-['Liberation_Sans',sans-serif] text-[30px] font-bold leading-none text-[#2da0e8]">e</span>
          <svg width="26" height="26" viewBox="0 0 26 26" className="absolute left-[10px] top-[7px]"><ellipse cx="13" cy="13" rx="12" ry="5" transform="rotate(-35 13 13)" fill="none" stroke="#e8c030" strokeWidth="1.3" /></svg>
        </Tray>
        <Underlined>
          <svg width="24" height="22" viewBox="0 0 24 22"><path d="M2 2h8l2 3h10v15H2z" fill="#f6d27a" /><rect x="9" y="12" width="7" height="8" fill="#3a9be0" /></svg>
        </Underlined>
        <div className="ml-[1px]"><Underlined>
          <svg width="26" height="26" viewBox="0 0 26 26"><circle cx="13" cy="13" r="10" fill="#6cc644" stroke="#e8f5e0" strokeWidth="2" /><path d="M8 13h9M17 13a4.5 4.5 0 1 0-2 4" fill="none" stroke="#fff" strokeWidth="2" /></svg>
        </Underlined></div>
        <div className="ml-[1px]"><Underlined>
          <svg width="26" height="26" viewBox="0 0 26 26"><path d="M21 5C13 0 4 6 4 14s8 11 13 8 5-9-1-9h-5" fill="none" stroke="#1d9be8" strokeWidth="5" /></svg>
        </Underlined></div>
        <div className="ml-[1px]"><Underlined>
          <svg width="24" height="24" viewBox="0 0 24 24"><rect x="1" y="1" width="22" height="22" rx="2" fill="#f09a20" /><path d="M6 5h12v14H6z" fill="#fbe6b8" /><path d="M8 9h8M8 12h8M8 15h5" stroke="#b06010" /></svg>
        </Underlined></div>
        <div className="ml-[1px]"><Underlined active><BlueApp /></Underlined></div>
        <span className="ml-[13px] w-[26px] shrink-0 whitespace-nowrap text-[12px] text-[#ccc]">链接</span>
        <div className="ml-[17px] flex w-[52px] shrink-0 flex-col items-center text-[12px] leading-[19px] text-[#ddd]">
          <span>25%</span><span className="whitespace-nowrap">CPU使用</span>
        </div>
        <svg width="14" height="8" viewBox="0 0 14 8" className="ml-[16px] shrink-0"><polyline points="1,7 7,1 13,7" fill="none" stroke="#eee" strokeWidth="1.2" /></svg>
        <Bell size={15} fill="#eee" stroke="#eee" className="ml-[10px] shrink-0" />
        <svg width="18" height="14" viewBox="0 0 18 14" className="ml-[8px] shrink-0"><rect x="3" y="4" width="14" height="9" fill="none" stroke="#eee" /><rect x="4" y="5" width="9" height="7" fill="#eee" /><path d="M1 1h5v3H1z" fill="#eee" /></svg>
        <Wifi size={17} className="ml-[7px] shrink-0 text-[#eee]" strokeWidth={1.5} />
        <Volume2 size={17} className="ml-[5px] shrink-0 text-[#eee]" strokeWidth={1.2} />
        <svg width="24" height="15" viewBox="0 0 24 15" className="ml-[7px] shrink-0" fill="none" stroke="#eee"><rect x=".5" y=".5" width="23" height="14" /><path d="M3 4h18M3 7h18" strokeDasharray="2 1" /><path d="M6 11h12" /></svg>
        <span className="ml-[9px] w-[14px] shrink-0 text-[14px] leading-none text-[#eee]">中</span>
        <div className="ml-[14px] shrink-0"><LogoS s={18} /></div>
        <div className="ml-[10px] flex w-[60px] shrink-0 flex-col items-center text-[13px] leading-[19px] text-[#e8e8e8]">
          <span>7:53</span><span className="whitespace-nowrap">2018/7/19</span>
        </div>
        <div className="relative ml-[14px] flex h-10 w-[30px] items-center justify-center">
          <svg width="16" height="15" viewBox="0 0 16 15"><path d="M0 0h16v12H7l-3 3v-3H0z" fill="#fff" /><path d="M3 4h10M3 7h10" stroke="#0a1216" /></svg>
          <span className="absolute bottom-[4px] right-[0px] flex h-[16px] w-[16px] items-center justify-center rounded-full bg-[#444] text-[11px] font-bold leading-none text-white">1</span>
        </div>
      </div>

      {/* sogou ime bar */}
      <div className="absolute left-[970px] top-0 flex items-start">
        <div className="absolute left-[2px] top-0 h-[6px] w-[26px] bg-[#4caf50]" />
        <div className="relative z-10 mt-[4px]"><LogoS s={27} /></div>
        <div className="mt-[3px] flex h-[23px] w-[177px] items-center gap-[4px] border border-[#cfe0ef] bg-white pl-[5px] text-[#1370c4]">
          <span className="w-[18px] text-center text-[13px] font-bold leading-none">中</span>
          <span className="w-[18px] text-center text-[13px] font-bold leading-none">°,</span>
          <svg width="18" height="18" viewBox="0 0 18 18" fill="none" stroke="#1370c4" strokeWidth="1.5"><circle cx="9" cy="9" r="7" /><path d="M5.5 11c2 2.5 5 2.5 7 0M7 6v2M11 6v2" /></svg>
          <Mic size={17} className="ml-[1px]" strokeWidth={2.4} />
          <svg width="18" height="14" viewBox="0 0 18 14" className="ml-[1px]"><rect width="18" height="14" rx="2" fill="#1370c4" /><path d="M3 4h12M3 7h12M5 10h8" stroke="#fff" strokeDasharray="1.5 1" /></svg>
          <svg width="18" height="18" viewBox="0 0 18 18" className="ml-[3px]"><circle cx="7" cy="5" r="3.5" fill="#b4c4d4" /><path d="M1 17c0-9 12-9 12 0z" fill="#b4c4d4" /></svg>
          <svg width="16" height="16" viewBox="0 0 16 16"><path d="M5 1L1 4l2 3 1-1v9h8V6l1 1 2-3-4-3-3 2z" fill="#1370c4" /></svg>
          <svg width="16" height="16" viewBox="0 0 16 16" className="ml-[3px]"><path d="M15 4a4 4 0 0 1-6 4l-6 7-2-2 6-6a4 4 0 0 1 4-6L9 4l2 2z" fill="#1370c4" /></svg>
        </div>
      </div>

      {/* red marks drawn over the screen */}
      <Ellipse cls="left-0 top-[500px]" rx={73} ry={25} sw={6} />
      <Ellipse cls="left-[218px] top-[533px]" rx={110} ry={16} sw={6} />
      <Ellipse cls="left-[699px] top-[519px]" rx={161} ry={37} sw={7} />
    </div>
  );
}
